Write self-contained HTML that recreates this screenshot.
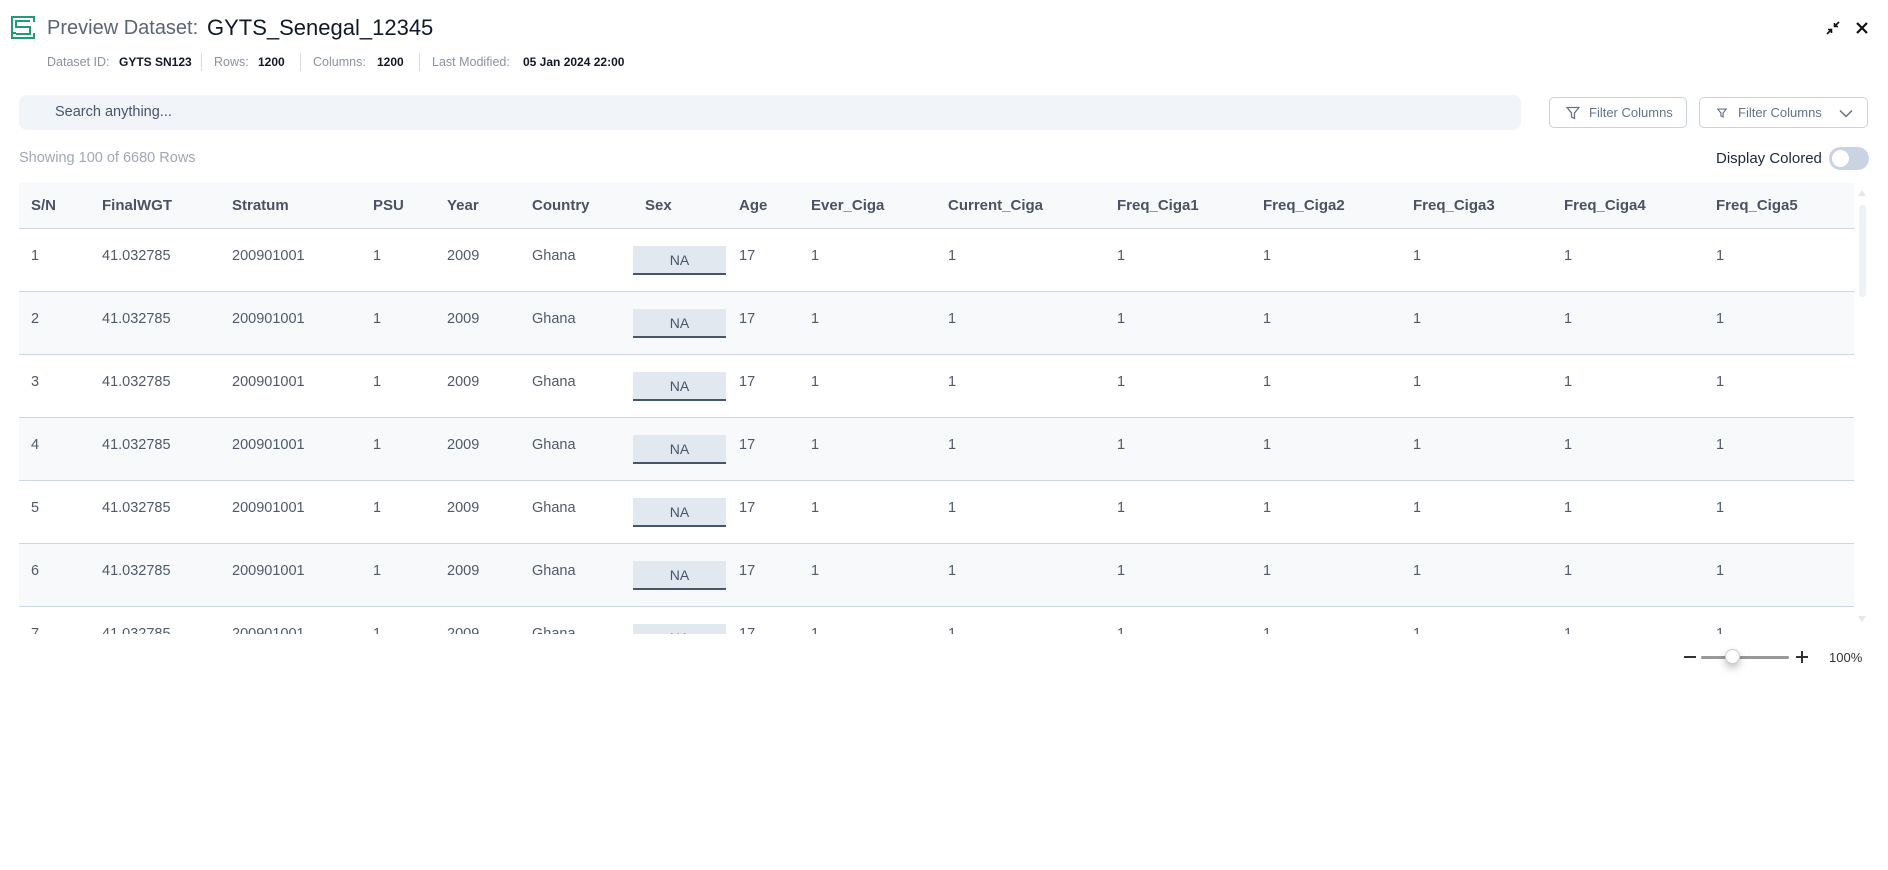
<!DOCTYPE html>
<html><head><meta charset="utf-8"><style>
*{margin:0;padding:0;box-sizing:border-box}
body{width:1888px;height:870px;background:#fff;font-family:"Liberation Sans",sans-serif;position:relative;overflow:hidden;color:#1e293b}
.a{position:absolute;white-space:nowrap}
.meta{top:54px;font-size:12.5px;line-height:16px}
.lab{color:#8a93a3}.val{color:#111827;font-weight:bold;font-size:12px}
.div{top:53px;width:1px;height:18px;background:#d6dbe3}
.btn{border:1px solid #c9d2de;border-radius:5px;top:97px;height:31px;font-size:13px;color:#64748b;display:flex;align-items:center}
.tbl{position:absolute;left:19px;top:183px;width:1835px;height:451px;overflow:hidden}
.hdr{position:absolute;left:0;top:0;width:1835px;height:46px;background:#f8f9fb;border-bottom:1.5px solid #cdd6e2}
.row{position:absolute;left:0;width:1835px;height:63px;border-bottom:1.5px solid #cdd6e2}
.c{position:absolute;white-space:nowrap}
.hdr .c{top:14px;font-size:15px;font-weight:bold;color:#4a5263}
.row .c{top:19px;font-size:14.5px;color:#505a6b}
.na{position:absolute;left:614px;top:17px;width:93px;height:29px;background:#e2e8f0;border-bottom:2px solid #475569;font-size:14px;color:#475569;text-align:center;line-height:29px}
</style></head><body>
<svg class="a" style="left:11px;top:16px" width="24" height="23" viewBox="0 0 24 23" fill="none" stroke="#1f9b7a" stroke-width="2"><path d="M23 6V1H1V22H23V17M1 17H5"/><path d="M19 5H5V11H19V18H5"/></svg>
<div class="a" style="left:47px;top:17px;font-size:20px;color:#5b6577">Preview Dataset:</div>
<div class="a" style="left:207px;top:15px;font-size:22px;color:#111827">GYTS_Senegal_12345</div>
<div class="a meta lab" style="left:47px">Dataset ID:</div>
<div class="a meta val" style="left:119px">GYTS SN123</div>
<div class="a div" style="left:201px"></div>
<div class="a meta lab" style="left:214px">Rows:</div>
<div class="a meta val" style="left:258px">1200</div>
<div class="a div" style="left:300px"></div>
<div class="a meta lab" style="left:313px">Columns:</div>
<div class="a meta val" style="left:377px">1200</div>
<div class="a div" style="left:419px"></div>
<div class="a meta lab" style="left:432px">Last Modified:</div>
<div class="a meta val" style="left:523px">05 Jan 2024 22:00</div>
<svg class="a" style="left:1826px;top:21px" width="14" height="14" viewBox="0 0 14 14" fill="none" stroke="#111" stroke-width="1.6"><path d="M1 13L5.5 8.5M2 8.5H5.5V12M13 1L8.5 5.5M12 5.5H8.5V2"/></svg>
<svg class="a" style="left:1855px;top:21px" width="14" height="14" viewBox="0 0 14 14" stroke="#111" stroke-width="2.2"><path d="M2 2L12 12M12 2L2 12"/></svg>
<div class="a" style="left:19px;top:95px;width:1502px;height:35px;background:#f1f4f9;border-radius:8px"></div>
<div class="a" style="left:55px;top:104px;font-size:14.5px;color:#475569">Search anything...</div>
<div class="a btn" style="left:1549px;width:138px;padding-left:16px"><svg width="14" height="14" viewBox="0 0 14 14" fill="none" stroke="#64748b" stroke-width="1.3"><path d="M1 1.5H13L8.5 7V12.5L5.5 11V7Z"/></svg><span style="margin-left:9px">Filter Columns</span></div>
<div class="a btn" style="left:1699px;width:169px;padding-left:17px"><svg width="10" height="10" viewBox="0 0 14 14" fill="none" stroke="#64748b" stroke-width="1.6"><path d="M1 1.5H13L8.5 7V12.5L5.5 11V7Z"/></svg><span style="margin-left:11px">Filter Columns</span><svg style="position:absolute;right:14px;top:11px" width="14" height="9" viewBox="0 0 14 9" fill="none" stroke="#64748b" stroke-width="1.5"><path d="M1 1.5L7 7.5L13 1.5"/></svg></div>
<div class="a" style="left:19px;top:150px;font-size:14.5px;color:#a0a8b5">Showing 100 of 6680 Rows</div>
<div class="a" style="left:1716px;top:150px;font-size:15px;color:#1e293b">Display Colored</div>
<div class="a" style="left:1829px;top:147px;width:40px;height:23px;border-radius:12px;background:#c9d3e1"><div style="position:absolute;left:3px;top:3px;width:17px;height:17px;border-radius:50%;background:#fff"></div></div>
<div class="tbl">
<div class="hdr"><span class="c" style="left:12px">S/N</span><span class="c" style="left:83px">FinalWGT</span><span class="c" style="left:213px">Stratum</span><span class="c" style="left:354px">PSU</span><span class="c" style="left:428px">Year</span><span class="c" style="left:513px">Country</span><span class="c" style="left:626px">Sex</span><span class="c" style="left:720px">Age</span><span class="c" style="left:792px">Ever_Ciga</span><span class="c" style="left:929px">Current_Ciga</span><span class="c" style="left:1098px">Freq_Ciga1</span><span class="c" style="left:1244px">Freq_Ciga2</span><span class="c" style="left:1394px">Freq_Ciga3</span><span class="c" style="left:1545px">Freq_Ciga4</span><span class="c" style="left:1697px">Freq_Ciga5</span></div>
<div id="rows"></div>
</div>
<script>
var h='';for(var i=0;i<7;i++){var t=46+i*63;h+='<div class="row" style="top:'+t+'px;background:'+(i%2?'#f8f9fb':'#fff')+'"><span class="c" style="left:12px">'+(i+1)+'</span><span class="c" style="left:83px">41.032785</span><span class="c" style="left:213px">200901001</span><span class="c" style="left:354px">1</span><span class="c" style="left:428px">2009</span><span class="c" style="left:513px">Ghana</span><div class="na">NA</div><span class="c" style="left:720px">17</span>';[792,929,1098,1244,1394,1545,1697].forEach(function(x){h+='<span class="c" style="left:'+x+'px">1</span>'});h+='</div>'}document.getElementById('rows').innerHTML=h;
</script>
<div class="a" style="left:1859px;top:205px;width:7px;height:92px;border-radius:4px;background:#eef1f5"></div>
<div class="a" style="left:1858px;top:190px;width:0;height:0;border-left:4px solid transparent;border-right:4px solid transparent;border-bottom:6px solid #e5e7eb"></div>
<div class="a" style="left:1858px;top:616px;width:0;height:0;border-left:4px solid transparent;border-right:4px solid transparent;border-top:6px solid #e5e7eb"></div>
<div class="a" style="left:1684px;top:656px;width:12px;height:2px;background:#333"></div>
<div class="a" style="left:1701px;top:656px;width:88px;height:3px;background:#999;border-radius:2px"></div>
<div class="a" style="left:1725px;top:649px;width:15px;height:15px;border-radius:50%;background:#fff;border:1px solid #ccc;box-shadow:0 4px 8px rgba(0,0,0,.25)"></div>
<div class="a" style="left:1796px;top:656px;width:12px;height:2px;background:#333"></div>
<div class="a" style="left:1801px;top:651px;width:2px;height:12px;background:#333"></div>
<div class="a" style="left:1829px;top:650px;font-size:13px;color:#333">100%</div>
</body></html>
